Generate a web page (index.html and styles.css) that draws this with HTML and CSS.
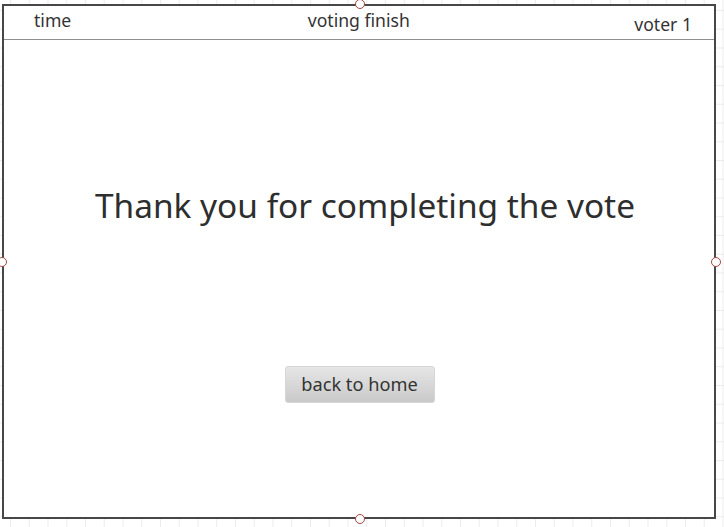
FILE: index.html
```html
<!DOCTYPE html>
<html lang="en">
<head>
<meta charset="utf-8">
<title>voting finish</title>
<link rel="stylesheet" href="styles.css">
</head>
<body>
<div class="frame">
  <header class="header">
    <span class="time">time</span>
    <span class="title-small">voting finish</span>
    <span class="voter">voter 1</span>
  </header>
  <main class="content">
    <h1 class="thanks">Thank you for completing the vote</h1>
    <button class="btn" type="button">back to home</button>
  </main>
  <span class="handle h-top"></span>
  <span class="handle h-bottom"></span>
  <span class="handle h-left"></span>
  <span class="handle h-right"></span>
</div>
</body>
</html>
```
FILE: styles.css
```css
html, body {
  margin: 0;
  padding: 0;
}
body {
  width: 724px;
  height: 527px;
  overflow: hidden;
  background-color: #ffffff;
  background-image:
    linear-gradient(to right, #ececec 1px, transparent 1px),
    linear-gradient(to bottom, #ececec 1px, transparent 1px);
  background-size: 18.75px 18.75px;
  background-position: 10px 10px;
  padding: 4px 0 0 2px;
  box-sizing: border-box;
  font-family: "Noto Sans", "Open Sans", sans-serif;
  color: #333333;
}
.frame {
  position: relative;
  width: 714px;
  height: 515px;
  box-sizing: border-box;
  border: 2px solid #474747;
  background: #ffffff;
  display: flex;
  flex-direction: column;
}
.header {
  height: 33px;
  border-bottom: 1px solid #8f8f8f;
  display: flex;
  justify-content: space-between;
  align-items: flex-start;
  padding: 0 22px 0 30px;
  font-size: 17.6px;
  line-height: 28px;
}
.title-small {
  position: relative;
  left: 6px;
}
.voter {
  padding-top: 4px;
}
.content {
  flex: 1;
  display: flex;
  flex-direction: column;
  align-items: center;
}
.thanks {
  margin: 143px 0 0 12px;
  font-weight: normal;
  font-size: 33.4px;
  line-height: 44px;
  color: #2e2e2e;
}
.btn {
  margin-top: 139px;
  margin-left: 1px;
  width: 150px;
  height: 37px;
  border: 1px solid #d6d6d6;
  border-radius: 3px;
  background: linear-gradient(to bottom, #e6e6e6, #c9c9c9);
  font-family: inherit;
  font-size: 18.2px;
  color: #333333;
  padding: 0 0 2px 0;
}
.handle {
  position: absolute;
  width: 10px;
  height: 10px;
  border-radius: 50%;
  border: 1px solid #a34646;
  background: #ffffff;
  box-sizing: border-box;
}
.h-top { top: -7px; left: 351px; }
.h-bottom { bottom: -7px; left: 351px; }
.h-left { left: -7px; top: 251px; }
.h-right { right: -7px; top: 251px; }
```
